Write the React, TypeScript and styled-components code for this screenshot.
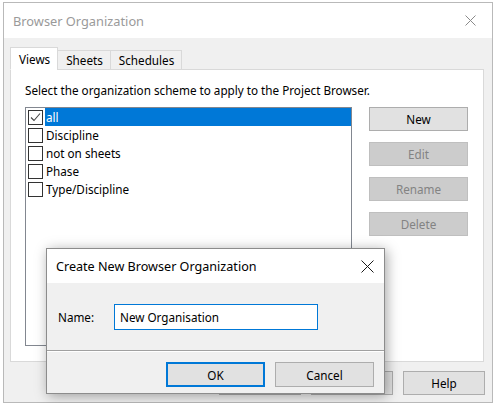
import React from "react";
import styled, { createGlobalStyle } from "styled-components";

const GlobalStyle = createGlobalStyle`
  html, body {
    margin: 0;
    padding: 0;
    background: #ffffff;
  }
  body {
    font-family: "Noto Sans", "Open Sans", "Liberation Sans", sans-serif;
    font-size: 11.7px;
    color: #000;
  }
`;

const items = [
  { label: "all", checked: true, selected: true },
  { label: "Discipline" },
  { label: "not on sheets" },
  { label: "Phase" },
  { label: "Type/Discipline" },
];

export default function App() {
  return (
    <>
      <GlobalStyle />
      <Window>
        <TitleBar>
          <TitleText>Browser Organization</TitleText>
          <CloseIcon $color="#8a8a8a" $size={11} />
        </TitleBar>
        <Body>
          <Tabs>
            <Tab $active>Views</Tab>
            <Tab>Sheets</Tab>
            <Tab>Schedules</Tab>
          </Tabs>
          <Panel>
            <Instruction>
              Select the organization scheme to apply to the Project Browser.
            </Instruction>
            <PanelRow>
              <ListBox>
                {items.map((it) => (
                  <ListRow key={it.label}>
                    <CheckBox>
                      {it.checked && (
                        <svg width="11" height="11" viewBox="0 0 11 11">
                          <path
                            d="M1 5.5 L4 8.5 L10 1.5"
                            fill="none"
                            stroke="#444"
                            strokeWidth="1.1"
                          />
                        </svg>
                      )}
                    </CheckBox>
                    <ItemLabel $selected={it.selected}>{it.label}</ItemLabel>
                  </ListRow>
                ))}
              </ListBox>
              <SideButtons>
                <Button>New</Button>
                <Button disabled>Edit</Button>
                <Button disabled>Rename</Button>
                <Button disabled>Delete</Button>
              </SideButtons>
            </PanelRow>
          </Panel>
          <Footer>
            {/* OK and Cancel of the main window sit hidden behind the dialog */}
            <Button $w={82} aria-label="OK" />
            <Button $w={82} aria-label="Cancel" />
            <Button $w={82}>Help</Button>
          </Footer>
        </Body>

        <Dialog>
          <DialogTitleBar>
            <DialogTitle>Create New Browser Organization</DialogTitle>
            <CloseIcon $color="#1a1a1a" $size={13} />
          </DialogTitleBar>
          <DialogContent>
            <FieldLabel>Name:</FieldLabel>
            <TextInput defaultValue="New Organisation" />
          </DialogContent>
          <DialogFooter>
            <Button $w={99} $h={25} $default>
              OK
            </Button>
            <Button $w={99} $h={25}>
              Cancel
            </Button>
          </DialogFooter>
        </Dialog>
      </Window>
    </>
  );
}

function CloseIcon({ $color, $size }: { $color: string; $size: number }) {
  return (
    <CloseWrap>
      <svg width={$size} height={$size} viewBox={`0 0 ${$size} ${$size}`}>
        <path
          d={`M0.5 0.5 L${$size - 0.5} ${$size - 0.5} M${$size - 0.5} 0.5 L0.5 ${$size - 0.5}`}
          stroke={$color}
          strokeWidth="1"
          fill="none"
        />
      </svg>
    </CloseWrap>
  );
}

const Window = styled.div`
  position: relative;
  margin: 2px 0 0 3px;
  width: 490px;
  height: 401px;
  border: 1px solid #b9b9b9;
  background: #f0f0f0;
  display: flex;
  flex-direction: column;
  box-sizing: border-box;
`;

const TitleBar = styled.div`
  height: 35px;
  background: #ffffff;
  display: flex;
  align-items: center;
  justify-content: space-between;
  padding: 0 11px 0 9px;
  flex-shrink: 0;
`;

const TitleText = styled.span`
  font-size: 12.8px;
  color: #9a9a9a;
`;

const CloseWrap = styled.span`
  display: flex;
  align-items: center;
  justify-content: center;
  width: 22px;
  height: 22px;
`;

const Body = styled.div`
  flex: 1;
  display: flex;
  flex-direction: column;
  padding: 8px 8px 0 6px;
`;

const Tabs = styled.div`
  display: flex;
  align-items: flex-end;
  height: 23px;
  position: relative;
  z-index: 1;
`;

const Tab = styled.div<{ $active?: boolean }>`
  height: ${(p) => (p.$active ? "23px" : "20px")};
  box-sizing: border-box;
  padding: 0 7px 0 8px;
  display: flex;
  align-items: center;
  background: ${(p) => (p.$active ? "#ffffff" : "#f0f0f0")};
  border: 1px solid #d9d9d9;
  border-bottom: ${(p) => (p.$active ? "1px solid #ffffff" : "1px solid #d9d9d9")};
  margin-bottom: -1px;
  margin-left: ${(p) => (p.$active ? "0" : "-1px")};
`;

const Panel = styled.div`
  width: 474px;
  height: 293px;
  box-sizing: border-box;
  background: #ffffff;
  border: 1px solid #d9d9d9;
  padding: 12px 15px 15px 14px;
  display: flex;
  flex-direction: column;
  gap: 9px;
`;

const Instruction = styled.div`
  line-height: 16px;
  white-space: nowrap;
`;

const PanelRow = styled.div`
  flex: 1;
  display: flex;
  gap: 17px;
`;

const ListBox = styled.div`
  width: 327px;
  box-sizing: border-box;
  border: 1px solid #828790;
  background: #fff;
  padding: 0 0 0 2px;
  display: flex;
  flex-direction: column;
`;

const ListRow = styled.div`
  display: flex;
  align-items: center;
  height: 18px;
  gap: 2px;
`;

const CheckBox = styled.span`
  width: 15px;
  height: 15px;
  box-sizing: border-box;
  border: 1px solid #333333;
  background: #fff;
  display: flex;
  align-items: center;
  justify-content: center;
`;

const ItemLabel = styled.span<{ $selected?: boolean }>`
  flex: 1;
  height: 18px;
  line-height: 18px;
  padding-left: 1px;
  background: ${(p) => (p.$selected ? "#0078d7" : "transparent")};
  color: ${(p) => (p.$selected ? "#ffffff" : "#000000")};
`;

const SideButtons = styled.div`
  display: flex;
  flex-direction: column;
  gap: 11px;
`;

const Button = styled.button<{ $w?: number; $h?: number; $default?: boolean }>`
  width: ${(p) => p.$w ?? 99}px;
  height: ${(p) => p.$h ?? 24}px;
  box-sizing: border-box;
  font-family: "Noto Sans", "Open Sans", "Liberation Sans", sans-serif;
  font-size: 11.7px;
  color: #000;
  background: #e1e1e1;
  border: ${(p) => (p.$default ? "2px solid #0078d7" : "1px solid #adadad")};
  padding: 0;
  border-radius: 0;

  &:disabled {
    background: #cccccc;
    border-color: #bfbfbf;
    color: #838383;
  }
`;

const Footer = styled.div`
  display: flex;
  justify-content: flex-end;
  gap: 10px;
  padding: 9px 0 0 0;
  margin-right: -1px;
`;

const Dialog = styled.div`
  position: absolute;
  left: 42px;
  top: 245px;
  width: 339px;
  height: 146px;
  box-sizing: border-box;
  border: 1px solid #8c8c8c;
  background: #f0f0f0;
  box-shadow: 2px 2px 12px rgba(0, 0, 0, 0.35);
  display: flex;
  flex-direction: column;
  z-index: 5;
`;

const DialogTitleBar = styled.div`
  height: 34px;
  background: #ffffff;
  display: flex;
  align-items: center;
  justify-content: space-between;
  padding: 0 6px 0 9px;
  flex-shrink: 0;
`;

const DialogTitle = styled.span`
  font-size: 12.6px;
  color: #000;
`;

const DialogContent = styled.div`
  height: 68px;
  display: flex;
  align-items: center;
  padding-left: 11px;
  border-bottom: 1px solid #a0a0a0;
  box-sizing: border-box;
`;

const FieldLabel = styled.span`
  width: 56px;
`;

const TextInput = styled.input`
  width: 204px;
  height: 26px;
  box-sizing: border-box;
  border: 1px solid #0078d7;
  background: #fff;
  padding: 0 5px;
  font-family: "Noto Sans", "Open Sans", "Liberation Sans", sans-serif;
  font-size: 11.7px;
  color: #000;
  outline: none;
`;

const DialogFooter = styled.div`
  flex: 1;
  display: flex;
  justify-content: flex-end;
  align-items: flex-start;
  gap: 10px;
  padding: 10px 10px 0 0;
  border-top: 1px solid #ffffff;
`;
